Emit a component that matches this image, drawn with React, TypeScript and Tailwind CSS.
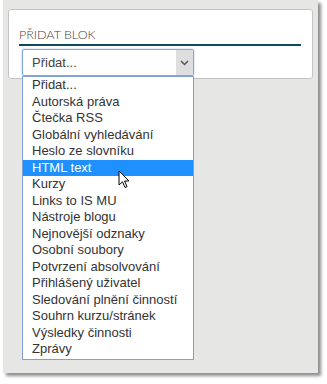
import React from "react";

const items = [
  "Přidat...",
  "Autorská práva",
  "Čtečka RSS",
  "Globální vyhledávání",
  "Heslo ze slovníku",
  "HTML text",
  "Kurzy",
  "Links to IS MU",
  "Nástroje blogu",
  "Nejnovější odznaky",
  "Osobní soubory",
  "Potvrzení absolvování",
  "Přihlášený uživatel",
  "Sledování plnění činností",
  "Souhrn kurzu/stránek",
  "Výsledky činnosti",
  "Zprávy",
];

export default function App() {
  return (
    <div className="relative w-[327px] h-[384px] bg-white overflow-hidden" style={{ fontFamily: '"Liberation Sans", Arial, sans-serif' }}>
      <div className="ml-[3px] w-[315px] h-[373px] bg-[#e6e6e5] shadow-[3px_3px_3px_rgba(0,0,0,0.45)] pt-[9px] px-[5px]">
        <div className="h-[70px] bg-white border border-[#c4c4c4] rounded-[3px] pl-[10px] pr-[11px] pt-[17px]">
          <div
            className="text-[12.5px] leading-[16px] font-light text-[#444]"
            style={{ fontFamily: 'Lato, "Open Sans", sans-serif' }}
          >
            PŘIDAT BLOK
          </div>
          <div className="mt-[1px] h-[2px] bg-[#0e4b5c]" />
          <div className="ml-[3px] mt-[3px] w-[172px] h-[27px] border border-[#7fa9e6] rounded-[2px] shadow-[0_0_2px_rgba(100,150,230,0.6)] flex items-stretch">
            <div className="flex-1 pl-[9px] flex items-center text-[13px] text-[#444]">Přidat...</div>
            <div className="w-[17px] bg-[#dedede] flex items-center justify-center">
              <svg width="9" height="6" viewBox="0 0 9 6">
                <path d="M1 1 L4.5 4.5 L8 1" fill="none" stroke="#555" strokeWidth="1.5" />
              </svg>
            </div>
          </div>
        </div>
      </div>

      <div className="absolute left-[22px] top-[76px] w-[172px] bg-white border border-[#7f9fd6] pb-[1px]">
        {items.map((it) => (
          <div
            key={it}
            className={
              "h-[16.5px] leading-[16.5px] pl-[9px] text-[13px] whitespace-nowrap " +
              (it === "HTML text" ? "bg-[#1e90ff] text-white" : "text-[#333]")
            }
          >
            {it}
          </div>
        ))}
      </div>

      <svg className="absolute left-[118px] top-[170px]" width="13" height="19" viewBox="0 0 13 19">
        <path
          d="M1 1 L1 15 L4.5 11.8 L7 17.5 L9 16.6 L6.6 11 L11 11 Z"
          fill="#fff"
          stroke="#000"
          strokeWidth="1"
          strokeLinejoin="miter"
        />
      </svg>
    </div>
  );
}
